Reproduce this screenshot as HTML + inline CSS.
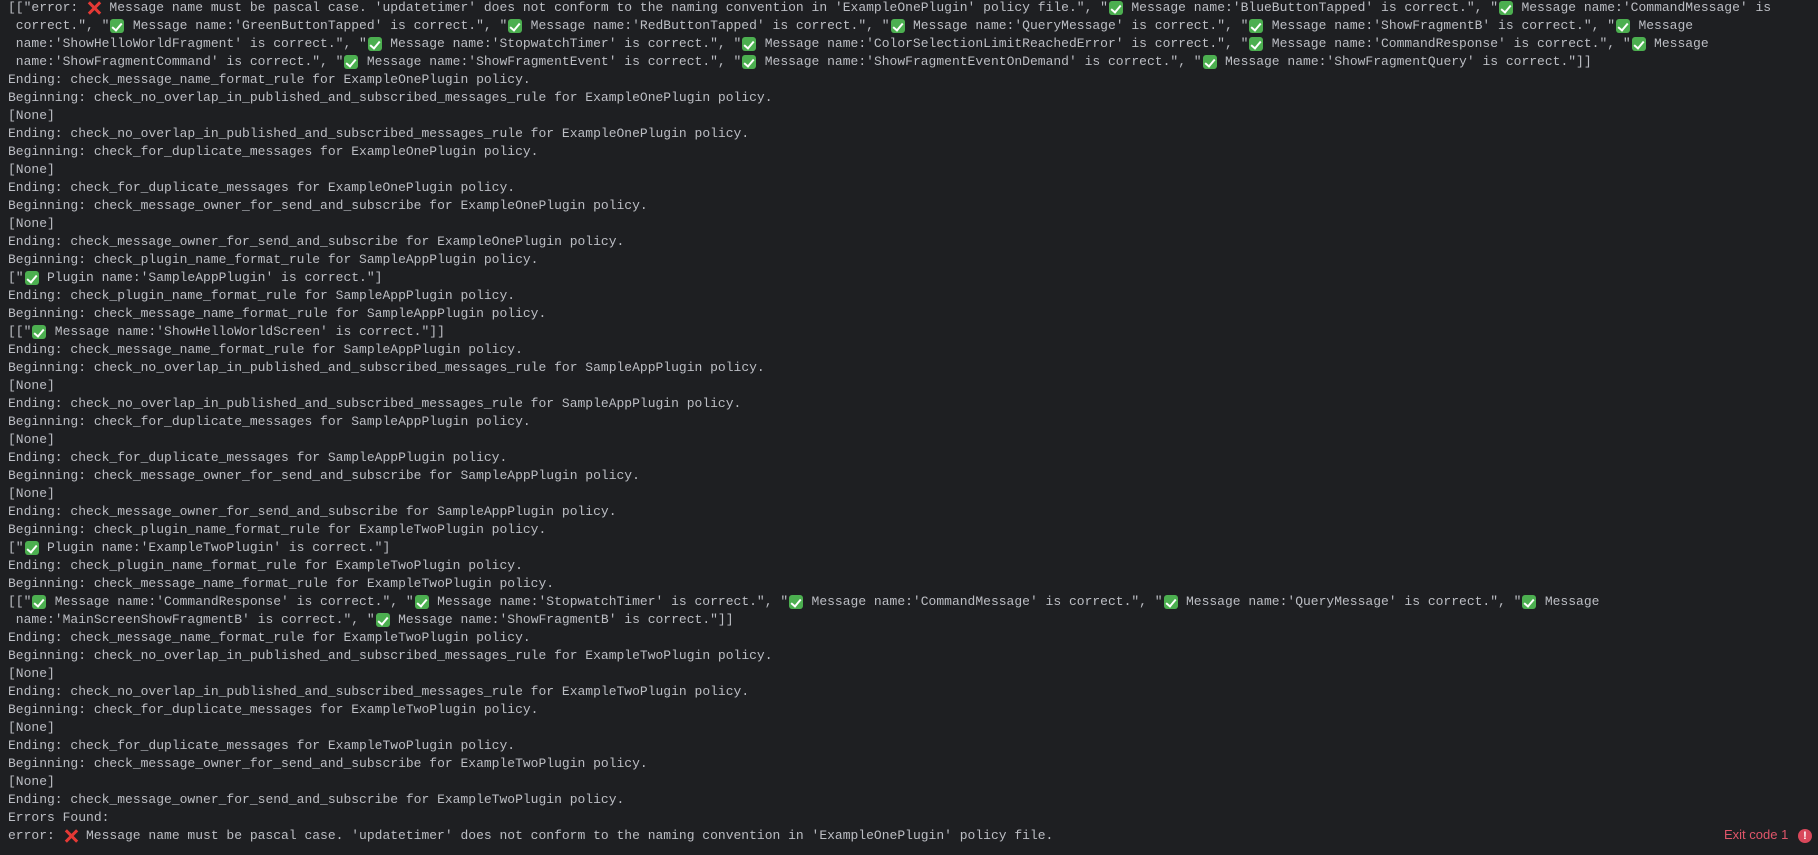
<!DOCTYPE html>
<html><head><meta charset="utf-8"><style>
html,body{margin:0;padding:0;background:#1e1f22;width:1818px;height:855px;overflow:hidden}
pre{margin:0;position:absolute;left:8px;top:-1px;font-family:"Liberation Mono","DejaVu Sans Mono",monospace;font-size:13px;line-height:18px;color:#bcbec4;white-space:pre}
.c,.x{display:inline-block;width:15.6px;height:18px;vertical-align:top;position:relative}
.c::before{content:"";position:absolute;left:1px;top:2px;width:14px;height:14px;background:#4caf50;border-radius:3px}
.c::after{content:"";position:absolute;left:5px;top:4px;width:4px;height:8px;border:solid #fff;border-width:0 2px 2px 0;transform:rotate(40deg)}
.x::before,.x::after{content:"";position:absolute;left:7px;top:1px;width:3px;height:16px;background:#e53935;transform:rotate(45deg)}
.x::after{transform:rotate(-45deg)}
.exit{position:absolute;left:1724px;top:827px;font-family:"Liberation Sans",sans-serif;font-size:13px;color:#e0566a}
.dot{position:absolute;left:1798px;top:829px;width:14px;height:14px;border-radius:50%;background:#d9485b;color:#fff;font:bold 11px "Liberation Sans",sans-serif;text-align:center;line-height:14px}
</style></head><body>
<pre>[["error: <span class="x"></span> Message name must be pascal case. 'updatetimer' does not conform to the naming convention in 'ExampleOnePlugin' policy file.", "<span class="c"></span> Message name:'BlueButtonTapped' is correct.", "<span class="c"></span> Message name:'CommandMessage' is
 correct.", "<span class="c"></span> Message name:'GreenButtonTapped' is correct.", "<span class="c"></span> Message name:'RedButtonTapped' is correct.", "<span class="c"></span> Message name:'QueryMessage' is correct.", "<span class="c"></span> Message name:'ShowFragmentB' is correct.", "<span class="c"></span> Message
 name:'ShowHelloWorldFragment' is correct.", "<span class="c"></span> Message name:'StopwatchTimer' is correct.", "<span class="c"></span> Message name:'ColorSelectionLimitReachedError' is correct.", "<span class="c"></span> Message name:'CommandResponse' is correct.", "<span class="c"></span> Message
 name:'ShowFragmentCommand' is correct.", "<span class="c"></span> Message name:'ShowFragmentEvent' is correct.", "<span class="c"></span> Message name:'ShowFragmentEventOnDemand' is correct.", "<span class="c"></span> Message name:'ShowFragmentQuery' is correct."]]
Ending: check_message_name_format_rule for ExampleOnePlugin policy.
Beginning: check_no_overlap_in_published_and_subscribed_messages_rule for ExampleOnePlugin policy.
[None]
Ending: check_no_overlap_in_published_and_subscribed_messages_rule for ExampleOnePlugin policy.
Beginning: check_for_duplicate_messages for ExampleOnePlugin policy.
[None]
Ending: check_for_duplicate_messages for ExampleOnePlugin policy.
Beginning: check_message_owner_for_send_and_subscribe for ExampleOnePlugin policy.
[None]
Ending: check_message_owner_for_send_and_subscribe for ExampleOnePlugin policy.
Beginning: check_plugin_name_format_rule for SampleAppPlugin policy.
["<span class="c"></span> Plugin name:'SampleAppPlugin' is correct."]
Ending: check_plugin_name_format_rule for SampleAppPlugin policy.
Beginning: check_message_name_format_rule for SampleAppPlugin policy.
[["<span class="c"></span> Message name:'ShowHelloWorldScreen' is correct."]]
Ending: check_message_name_format_rule for SampleAppPlugin policy.
Beginning: check_no_overlap_in_published_and_subscribed_messages_rule for SampleAppPlugin policy.
[None]
Ending: check_no_overlap_in_published_and_subscribed_messages_rule for SampleAppPlugin policy.
Beginning: check_for_duplicate_messages for SampleAppPlugin policy.
[None]
Ending: check_for_duplicate_messages for SampleAppPlugin policy.
Beginning: check_message_owner_for_send_and_subscribe for SampleAppPlugin policy.
[None]
Ending: check_message_owner_for_send_and_subscribe for SampleAppPlugin policy.
Beginning: check_plugin_name_format_rule for ExampleTwoPlugin policy.
["<span class="c"></span> Plugin name:'ExampleTwoPlugin' is correct."]
Ending: check_plugin_name_format_rule for ExampleTwoPlugin policy.
Beginning: check_message_name_format_rule for ExampleTwoPlugin policy.
[["<span class="c"></span> Message name:'CommandResponse' is correct.", "<span class="c"></span> Message name:'StopwatchTimer' is correct.", "<span class="c"></span> Message name:'CommandMessage' is correct.", "<span class="c"></span> Message name:'QueryMessage' is correct.", "<span class="c"></span> Message
 name:'MainScreenShowFragmentB' is correct.", "<span class="c"></span> Message name:'ShowFragmentB' is correct."]]
Ending: check_message_name_format_rule for ExampleTwoPlugin policy.
Beginning: check_no_overlap_in_published_and_subscribed_messages_rule for ExampleTwoPlugin policy.
[None]
Ending: check_no_overlap_in_published_and_subscribed_messages_rule for ExampleTwoPlugin policy.
Beginning: check_for_duplicate_messages for ExampleTwoPlugin policy.
[None]
Ending: check_for_duplicate_messages for ExampleTwoPlugin policy.
Beginning: check_message_owner_for_send_and_subscribe for ExampleTwoPlugin policy.
[None]
Ending: check_message_owner_for_send_and_subscribe for ExampleTwoPlugin policy.
Errors Found:
error: <span class="x"></span> Message name must be pascal case. 'updatetimer' does not conform to the naming convention in 'ExampleOnePlugin' policy file.</pre>
<div class="exit">Exit code 1</div><div class="dot">!</div>
</body></html>
